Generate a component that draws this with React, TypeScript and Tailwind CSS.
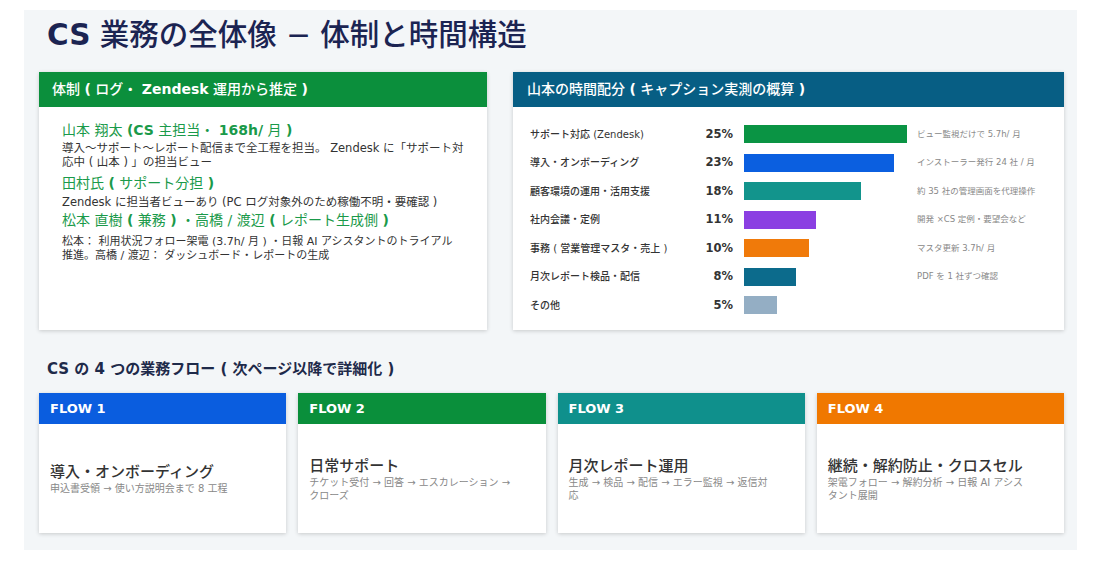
import React from "react";

const FONT = { fontFamily: '"DejaVu Sans", "Noto Sans CJK JP", sans-serif' };

const rows = [
  { label: "サポート対応 (Zendesk)", pct: 25, color: "#0a9444", note: "ビュー監視だけで 5.7h/ 月" },
  { label: "導入・オンボーディング", pct: 23, color: "#0b5fe0", note: "インストーラー発行 24 社 / 月" },
  { label: "顧客環境の運用・活用支援", pct: 18, color: "#12948c", note: "約 35 社の管理画面を代理操作" },
  { label: "社内会議・定例", pct: 11, color: "#8b3fe2", note: "開発 ×CS 定例・要望会など" },
  { label: "事務 ( 営業管理マスタ・売上 )", pct: 10, color: "#f07a0a", note: "マスタ更新 3.7h/ 月" },
  { label: "月次レポート検品・配信", pct: 8, color: "#0c6b8c", note: "PDF を 1 社ずつ確認" },
  { label: "その他", pct: 5, color: "#94aec4", note: "" },
];

const flows = [
  { n: "FLOW 1", bg: "bg-[#0a5ddf]", title: "導入・オンボーディング", sub: ["申込書受領 → 使い方説明会まで 8 工程"] },
  { n: "FLOW 2", bg: "bg-[#0a8f3b]", title: "日常サポート", sub: ["チケット受付 → 回答 → エスカレーション →", "クローズ"] },
  { n: "FLOW 3", bg: "bg-[#0f908c]", title: "月次レポート運用", sub: ["生成 → 検品 → 配信 → エラー監視 → 返信対", "応"] },
  { n: "FLOW 4", bg: "bg-[#f07800]", title: "継続・解約防止・クロスセル", sub: ["架電フォロー → 解約分析 → 日報 AI アシス", "タント展開"] },
];

export default function App() {
  return (
    <div className="w-[1100px] h-[568px] bg-white overflow-hidden" style={FONT}>
      <div className="ml-[24px] mt-[10px] w-[1053px] h-[540px] bg-[#f3f6f8] pl-[15px] pr-[13px] pt-[4px]">
        <h1 className="ml-[8px] h-[42px] leading-[42px] text-[29.5px] text-[#1b2452] whitespace-nowrap">
          <span className="font-bold">CS</span>
          <span className="font-medium"> 業務の全体像 − 体制と時間構造</span>
        </h1>

        <div className="mt-[16px] flex gap-[26px] h-[258px]">
          {/* left card */}
          <div className="w-[448px] bg-white shadow-[0_1px_4px_rgba(0,0,0,0.18)] flex flex-col">
            <div className="h-[35px] bg-[#0b8f3c] text-white text-[14px] flex items-center pl-[13px] whitespace-nowrap">
              <span className="font-medium">
                体制 <b>(</b> ログ・ <b>Zendesk</b> 運用から推定 <b>)</b>
              </span>
            </div>
            <div className="pl-[23px] pr-[14px] pt-[13px] text-[#1a9a4a]">
              <div className="h-[20px] leading-[20px] text-[14px] whitespace-nowrap">
                山本 翔太 <b>(CS</b> 主担当・ <b>168h/</b> 月 <b>)</b>
              </div>
              <div className="mt-[1px] text-[11.5px] leading-[14px] text-[#333]">
                導入〜サポート〜レポート配信まで全工程を担当。 Zendesk に「サポート対
                <br />
                応中 ( 山本 ) 」の担当ビュー
              </div>
              <div className="mt-[4px] h-[20px] leading-[20px] text-[14px] whitespace-nowrap">
                田村氏 <b>(</b> サポート分担 <b>)</b>
              </div>
              <div className="mt-[2px] text-[11.5px] leading-[14px] text-[#333] whitespace-nowrap">
                Zendesk に担当者ビューあり (PC ログ対象外のため稼働不明・要確認 )
              </div>
              <div className="mt-[1px] h-[20px] leading-[20px] text-[14px] whitespace-nowrap">
                松本 直樹 <b>(</b> 兼務 <b>)</b> ・高橋 / 渡辺 <b>(</b> レポート生成側 <b>)</b>
              </div>
              <div className="mt-[5px] text-[11px] leading-[14px] text-[#333]">
                松本： 利用状況フォロー架電 (3.7h/ 月 ) ・日報 AI アシスタントのトライアル
                <br />
                推進。高橋 / 渡辺： ダッシュボード・レポートの生成
              </div>
            </div>
          </div>

          {/* right card */}
          <div className="flex-1 bg-white shadow-[0_1px_4px_rgba(0,0,0,0.18)] flex flex-col">
            <div className="h-[35px] bg-[#075e84] text-white text-[14px] flex items-center pl-[14px] whitespace-nowrap">
              <span className="font-medium">
                山本の時間配分 <b>(</b> キャプション実測の概算 <b>)</b>
              </span>
            </div>
            <div className="pl-[17px] pt-[13px]">
              {rows.map((r) => (
                <div key={r.label} className="h-[28.5px] flex items-center">
                  <div className="w-[170px] text-[10px] text-[#333] font-medium whitespace-nowrap">{r.label}</div>
                  <div className="w-[33px] text-right text-[11.5px] font-bold text-[#333]">{r.pct}%</div>
                  <div className="ml-[11px] w-[173px] h-[18px] flex">
                    <div className="h-full" style={{ width: `${r.pct * 6.52}px`, backgroundColor: r.color }} />
                  </div>
                  <div className="text-[8.5px] text-[#888] whitespace-nowrap">{r.note}</div>
                </div>
              ))}
            </div>
          </div>
        </div>

        <h2 className="ml-[8px] mt-[28px] h-[22px] leading-[22px] text-[15px] font-bold text-[#1e2a4a] whitespace-nowrap">
          CS の 4 つの業務フロー ( 次ページ以降で詳細化 )
        </h2>

        <div className="mt-[13px] grid grid-cols-4 gap-[12px] h-[140px]">
          {flows.map((f) => (
            <div key={f.n} className="bg-white shadow-[0_1px_4px_rgba(0,0,0,0.18)] flex flex-col">
              <div className={`${f.bg} h-[31px] flex items-center pl-[11px] text-white text-[13px] font-bold`}>{f.n}</div>
              <div className="flex-1 flex flex-col justify-center pl-[11px] pr-[8px]">
                <div className="text-[15px] leading-[20px] font-medium text-[#333] whitespace-nowrap">{f.title}</div>
                <div className="text-[10px] leading-[13px] text-[#888] whitespace-nowrap">
                  {f.sub.map((s, i) => (
                    <div key={i}>{s}</div>
                  ))}
                </div>
              </div>
            </div>
          ))}
        </div>
      </div>
    </div>
  );
}
